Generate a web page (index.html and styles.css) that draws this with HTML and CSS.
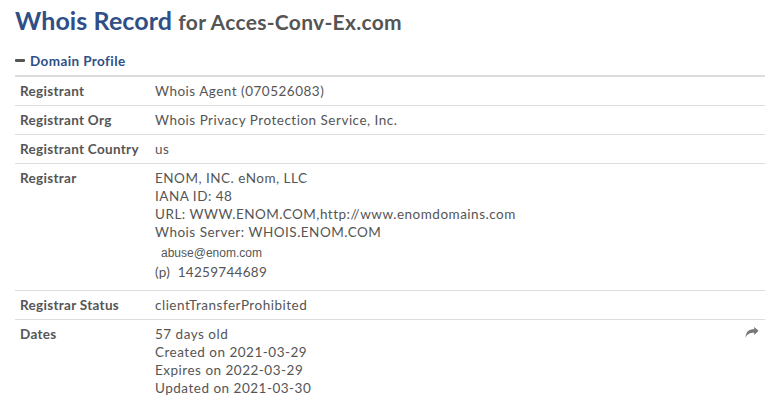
FILE: index.html
```html
<!DOCTYPE html>
<html>
<head>
<meta charset="utf-8">
<link rel="stylesheet" href="styles.css">
</head>
<body>
<div class="page">
  <h1 class="title">Whois Record <span class="for">for Acces-Conv-Ex.com</span></h1>
  <div class="section-head"><span class="minus"></span>Domain Profile</div>
  <table class="profile">
    <tr><td class="label">Registrant</td><td class="value">Whois Agent (070526083)</td></tr>
    <tr><td class="label">Registrant Org</td><td class="value">Whois Privacy Protection Service, Inc.</td></tr>
    <tr><td class="label">Registrant Country</td><td class="value">us</td></tr>
    <tr><td class="label">Registrar</td><td class="value">ENOM, INC. eNom, LLC<br>IANA ID: 48<br>URL: WWW.ENOM.COM,http:<span class="slash">/</span>/www.enomdomains.com<br>Whois Server: WHOIS.ENOM.COM<div class="abuse">abuse@enom.com</div><div class="phone">(p)&nbsp; 14259744689</div></td></tr>
    <tr><td class="label">Registrar Status</td><td class="value">clientTransferProhibited</td></tr>
    <tr><td class="label">Dates</td><td class="value dates">57 days old<br>Created on 2021-03-29<br>Expires on 2022-03-29<br>Updated on 2021-03-30<svg class="share" viewBox="0 0 12 10" width="14" height="11"><path d="M12 3.5 L8 0 V2 C3 2 0.5 4 0 10 C1.5 6.5 4 5.3 8 5.3 V7.3 Z" fill="#777"/></svg></td></tr>
  </table>
</div>
</body>
</html>
```
FILE: styles.css
```css
html, body { margin: 0; padding: 0; background: #fff; }
body { font-family: Lato, "Open Sans", sans-serif; color: #555; }
.page { padding: 0 19px 0 15px; }
.title { margin: 0; padding-top: 5px; font-size: 25px; font-weight: 700; color: #2f4f86; line-height: 30px; letter-spacing: 0.1px; }
.for { font-size: 21px; color: #555; letter-spacing: 0.3px; }
.section-head { margin-top: 14px; height: 19px; font-size: 13.5px; font-weight: 700; color: #2f4f86; display: flex; align-items: center; letter-spacing: 0.4px; }
.minus { width: 10px; height: 3px; background: #555; margin-right: 5px; border-radius: 1px; }
.profile { width: 100%; border-collapse: collapse; margin-top: 5px; border-top: 2px solid #ddd; font-size: 13.5px; }
.profile td { border-bottom: 1px solid #ddd; padding: 5px; line-height: 18px; vertical-align: top; }
.profile tr:last-child td { border-bottom: none; }
.label { width: 125px; font-weight: 700; letter-spacing: 0.3px; }
.value { letter-spacing: 0.5px; }
.slash { letter-spacing: -3px; }
.abuse { font-family: "Liberation Sans", Arial, sans-serif; font-size: 12px; letter-spacing: 0; margin-top: 3px; padding-left: 6px; line-height: 18px; }
.phone { line-height: 20px; margin-bottom: 3px; letter-spacing: 0.3px; }
.dates { position: relative; }
.share { position: absolute; right: 6px; top: 7px; }
```
